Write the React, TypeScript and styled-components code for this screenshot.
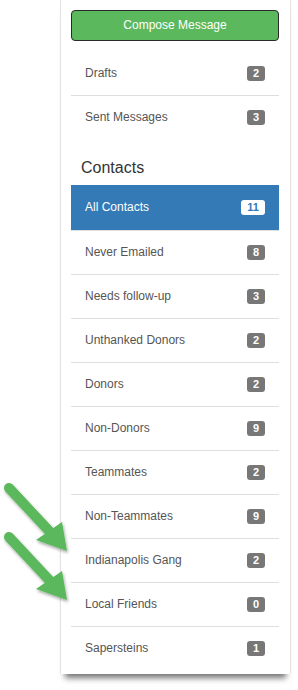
import styled, { createGlobalStyle } from "styled-components";

const GlobalStyle = createGlobalStyle`
  html, body {
    margin: 0;
    padding: 0;
    background: #fff;
  }
  body {
    font-family: "Liberation Sans", Arial, sans-serif;
  }
`;

const Page = styled.div`
  position: relative;
  width: 298px;
  height: 690px;
  overflow: hidden;
`;

const Sidebar = styled.div`
  margin-left: 60px;
  width: 208px;
  padding: 10px 11px 4px 10px;
  background: #fff;
  border-left: 1px solid #e3e3e3;
  border-right: 1px solid #e3e3e3;
  box-shadow: 0 9px 6px -5px rgba(0, 0, 0, 0.55);
`;

const ComposeButton = styled.button`
  display: block;
  width: 100%;
  padding: 7px 0;
  margin: 0 0 10px;
  font-family: inherit;
  font-size: 12px;
  line-height: 15px;
  color: #fff;
  background: #5cb85c;
  border: 1px solid #2a2a2a;
  border-radius: 4px;
  cursor: pointer;
`;

const List = styled.div`
  display: flex;
  flex-direction: column;
`;

const Item = styled.a<{ $active?: boolean }>`
  display: flex;
  align-items: center;
  justify-content: space-between;
  padding: 14px 14px ${(p) => (p.$active ? "15px" : "14px")};
  font-size: 12px;
  line-height: 15px;
  color: ${(p) => (p.$active ? "#fff" : "#555")};
  background: ${(p) => (p.$active ? "#337ab7" : "transparent")};
  border-top: 1px solid ${(p) => (p.$active ? "#337ab7" : "#dedede")};
  text-decoration: none;
  cursor: pointer;

  &:first-child {
    border-top-color: ${(p) => (p.$active ? "#337ab7" : "transparent")};
  }
`;

const Badge = styled.span<{ $active?: boolean }>`
  display: inline-block;
  min-width: 6px;
  padding: 2px 6px;
  font-size: 11px;
  font-weight: bold;
  line-height: 11px;
  text-align: center;
  color: ${(p) => (p.$active ? "#337ab7" : "#fff")};
  background: ${(p) => (p.$active ? "#fff" : "#777")};
  border-radius: 3px;
`;

const Heading = styled.h4`
  margin: 0;
  padding: 20px 10px 8px;
  font-size: 16px;
  font-weight: normal;
  line-height: 18px;
  color: #333;
`;

const Arrows = styled.svg`
  position: absolute;
  left: 0;
  top: 470px;
  pointer-events: none;
`;

const messages = [
  { label: "Drafts", count: 2 },
  { label: "Sent Messages", count: 3 },
];

const contacts = [
  { label: "All Contacts", count: 11, active: true },
  { label: "Never Emailed", count: 8 },
  { label: "Needs follow-up", count: 3 },
  { label: "Unthanked Donors", count: 2 },
  { label: "Donors", count: 2 },
  { label: "Non-Donors", count: 9 },
  { label: "Teammates", count: 2 },
  { label: "Non-Teammates", count: 9 },
  { label: "Indianapolis Gang", count: 2 },
  { label: "Local Friends", count: 0 },
  { label: "Sapersteins", count: 1 },
];

function Arrow({ dy }: { dy: number }) {
  return (
    <g transform={`translate(0 ${dy})`}>
      <line
        x1="9"
        y1="18"
        x2="51"
        y2="63"
        stroke="#5cb85c"
        strokeWidth="10"
        strokeLinecap="round"
      />
      <polygon points="36,70 62,52 67,81" fill="#5cb85c" />
    </g>
  );
}

export default function App() {
  return (
    <Page>
      <GlobalStyle />
      <Sidebar>
        <ComposeButton>Compose Message</ComposeButton>
        <List>
          {messages.map((m) => (
            <Item key={m.label}>
              {m.label}
              <Badge>{m.count}</Badge>
            </Item>
          ))}
        </List>
        <Heading>Contacts</Heading>
        <List>
          {contacts.map((c) => (
            <Item key={c.label} $active={c.active}>
              {c.label}
              <Badge $active={c.active}>{c.count}</Badge>
            </Item>
          ))}
        </List>
      </Sidebar>
      <Arrows width="80" height="140" viewBox="0 0 80 140">
        <defs>
          <filter id="arrowShadow" x="-20%" y="-20%" width="150%" height="150%">
            <feDropShadow dx="1" dy="2" stdDeviation="1.5" floodColor="#000" floodOpacity="0.35" />
          </filter>
        </defs>
        <g filter="url(#arrowShadow)">
          <Arrow dy={0} />
          <Arrow dy={49} />
        </g>
      </Arrows>
    </Page>
  );
}
